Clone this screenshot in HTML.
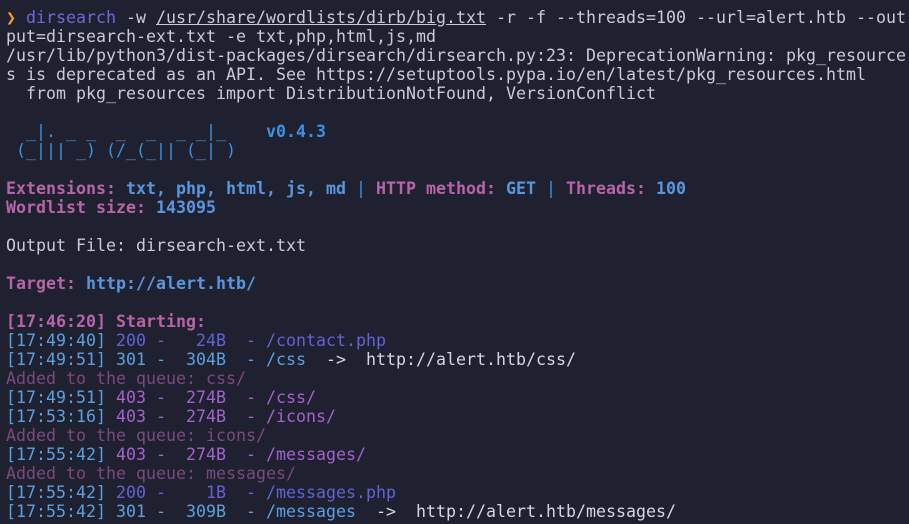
<!DOCTYPE html>
<html><head><meta charset="utf-8"><style>
html,body{margin:0;padding:0;background:#1f2130;width:909px;height:524px;overflow:hidden}
pre{margin:0;padding:8px 0 0 6px;font-family:"DejaVu Sans Mono","Liberation Mono",monospace;font-size:16.62px;line-height:19px;color:#c9cad6;white-space:pre}
.o{color:#f0a030}.d{color:#6a6ad8}.u{text-decoration:underline}
.bn{color:#3a92e0}.v{color:#3a92e0;font-weight:bold}
.l{color:#b864a8;font-weight:bold}.b{color:#5a96e0;font-weight:bold}
.t{color:#5aa0e0}.g{color:#6262d4}.p{color:#a462cc}.c{color:#5aa0e0}
.a{color:#7a4a7c}.s{color:#b864a8;font-weight:bold}.w{color:#d6d6e0}
</style></head><body><pre><span class="o">❯</span> <span class="d">dirsearch</span> -w <span class="u">/usr/share/wordlists/dirb/big.txt</span> -r -f --threads=100 --url=alert.htb --out
put=dirsearch-ext.txt -e txt,php,html,js,md
/usr/lib/python3/dist-packages/dirsearch/dirsearch.py:23: DeprecationWarning: pkg_resource
s is deprecated as an API. See https://setuptools.pypa.io/en/latest/pkg_resources.html
  from pkg_resources import DistributionNotFound, VersionConflict

<span class="bn">  _|. _ _  _  _  _ _|_    </span><span class="v">v0.4.3</span>
<span class="bn"> (_||| _) (/_(_|| (_| )</span>

<span class="l">Extensions: </span><span class="b">txt, php, html, js, md</span><span class="bn"> | </span><span class="l">HTTP method: </span><span class="b">GET</span><span class="bn"> | </span><span class="l">Threads: </span><span class="b">100</span>
<span class="l">Wordlist size: </span><span class="b">143095</span>

Output File: dirsearch-ext.txt

<span class="l">Target: </span><span class="b">http://alert.htb/</span>

<span class="s">[17:46:20] Starting: </span>
<span class="t">[17:49:40] </span><span class="g">200 -   24B  - /contact.php</span>
<span class="t">[17:49:51] </span><span class="c">301 -  304B  - /css</span>  <span class="w">-&gt;  http://alert.htb/css/</span>
<span class="a">Added to the queue: css/</span>
<span class="t">[17:49:51] </span><span class="p">403 -  274B  - /css/</span>
<span class="t">[17:53:16] </span><span class="p">403 -  274B  - /icons/</span>
<span class="a">Added to the queue: icons/</span>
<span class="t">[17:55:42] </span><span class="p">403 -  274B  - /messages/</span>
<span class="a">Added to the queue: messages/</span>
<span class="t">[17:55:42] </span><span class="g">200 -    1B  - /messages.php</span>
<span class="t">[17:55:42] </span><span class="c">301 -  309B  - /messages</span>  <span class="w">-&gt;  http://alert.htb/messages/</span>
</pre></body></html>
